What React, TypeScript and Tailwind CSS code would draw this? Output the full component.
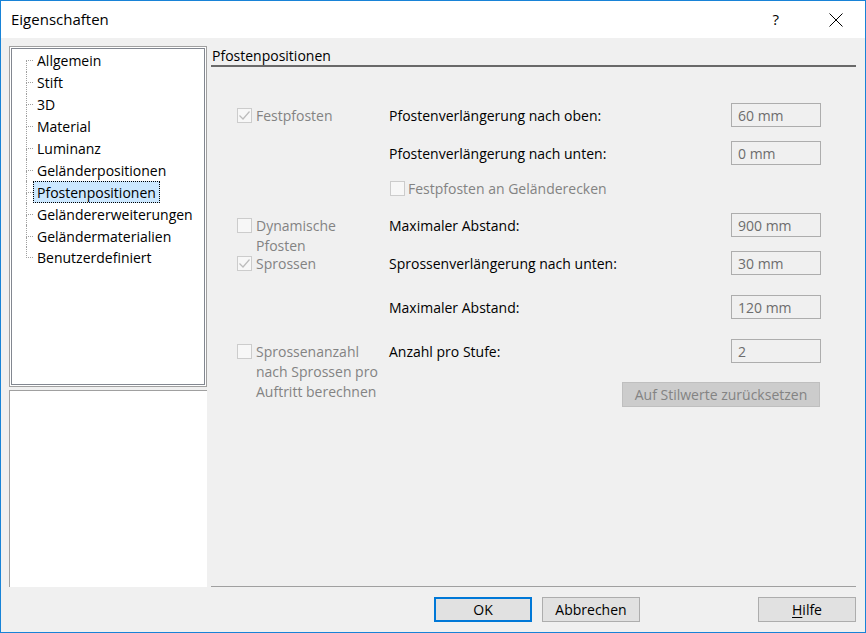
import React from 'react';

const font = { fontFamily: '"Segoe UI", "Open Sans", sans-serif' };

const treeItems = [
    'Allgemein',
    'Stift',
    '3D',
    'Material',
    'Luminanz',
    'Geländerpositionen',
    'Pfostenpositionen',
    'Geländererweiterungen',
    'Geländermaterialien',
    'Benutzerdefiniert',
];

const Check: React.FC<{ checked?: boolean }> = ({ checked }) => (
    <div className="w-[15px] h-[15px] shrink-0 border border-[#cccccc] bg-[#f7f7f7] flex items-center justify-center">
        {checked && (
            <svg width="13" height="13" viewBox="0 0 13 13">
                <path d="M1.5 6.5 L5 10 L11.5 2.5" fill="none" stroke="#bcbcbc" strokeWidth="1.2" />
            </svg>
        )}
    </div>
);

const Field: React.FC<{ value: string }> = ({ value }) => (
    <div className="w-[90px] h-[24px] shrink-0 border border-[#adadad] bg-[#f0f0f0] text-[#6d6d6d] pl-[6px] flex items-center">
        {value}
    </div>
);

// left column cell: disabled checkbox with a label that may wrap onto several lines
const LeftOption: React.FC<{ checked?: boolean; lines: string[] }> = ({ checked, lines }) => (
    <div className="w-[152px] h-[20px] shrink-0 flex items-start gap-[4px] text-[#838383] pt-[1px]">
        <div className="pt-[2px]">
            <Check checked={checked} />
        </div>
        <div className="leading-[20px]">
            {lines.map(l => (
                <div key={l}>{l}</div>
            ))}
        </div>
    </div>
);

const Row: React.FC<{ className?: string; left?: React.ReactNode; label: string; value: string }> = ({ className, left, label, value }) => (
    <div className={`flex items-center h-[24px] ${className ?? ''}`}>
        {left ?? <div className="w-[152px] shrink-0" />}
        <div className="flex-1 text-black">{label}</div>
        <Field value={value} />
    </div>
);

export default function App() {
    return (
        <div className="w-[866px] h-[633px] border border-[#1883d7] bg-[#f0f0f0] flex flex-col text-[14px] select-none" style={font}>
            {/* Title bar */}
            <div className="h-[37px] bg-white flex items-center pl-[10px] pr-[22px] shrink-0">
                <span className="text-[15px] text-black">Eigenschaften</span>
                <span className="ml-auto text-[15px] text-black mr-[50px]">?</span>
                <svg width="14" height="14" viewBox="0 0 14 14">
                    <path d="M0.5 0.5 L13.5 13.5 M13.5 0.5 L0.5 13.5" stroke="#000" strokeWidth="1" />
                </svg>
            </div>

            {/* Main area */}
            <div className="flex flex-1 pl-[8px] pt-[8px] pr-[9px] min-h-0">
                {/* Left: tree + preview */}
                <div className="w-[198px] shrink-0 flex flex-col gap-[3px]">
                    <div className="h-[341px] border border-[#a0a0a0] bg-white p-px">
                        <div className="h-full border border-[#828790] bg-white pl-[14px] pt-[1px]">
                            {treeItems.map((item, i) => {
                                const selected = item === 'Pfostenpositionen';
                                return (
                                    <div key={item} className="flex items-stretch h-[21.9px]">
                                        <div className="w-[7px] shrink-0 flex flex-col">
                                            <div className={`flex-1 border-b border-dotted border-[#a0a0a0] ${i > 0 ? 'border-l' : ''}`} />
                                            <div className={`flex-1 border-dotted border-[#a0a0a0] ${i < treeItems.length - 1 ? 'border-l' : ''}`} />
                                        </div>
                                        <div
                                            className={`flex items-center px-[3px] border border-dotted leading-[19px] text-black ${
                                                selected ? 'bg-[#cce8ff] border-black' : 'border-transparent'
                                            }`}
                                        >
                                            {item}
                                        </div>
                                    </div>
                                );
                            })}
                        </div>
                    </div>
                    <div className="flex-1 bg-white border-l border-t border-[#a0a0a0]" />
                </div>

                {/* Right: page content */}
                <div className="flex-1 ml-[4px] flex flex-col border-b border-[#a0a0a0]">
                    <div className="h-[21px] flex items-end pl-[1px] border-b-2 border-[#696969]">
                        <span className="leading-[18px] text-black">Pfostenpositionen</span>
                    </div>

                    <div className="pl-[26px] pr-[35px] pt-[36px] flex flex-col">
                        <Row left={<LeftOption checked lines={['Festpfosten']} />} label="Pfostenverlängerung nach oben:" value="60 mm" />
                        <Row className="mt-[14px]" label="Pfostenverlängerung nach unten:" value="0 mm" />

                        <div className="flex items-center h-[20px] mt-[13px]">
                            <div className="w-[152px] shrink-0" />
                            <div className="ml-[1px] flex items-center gap-[3px] text-[#838383]">
                                <Check />
                                <span>Festpfosten an Geländerecken</span>
                            </div>
                        </div>

                        <Row className="mt-[15px]" left={<LeftOption lines={['Dynamische', 'Pfosten']} />} label="Maximaler Abstand:" value="900 mm" />
                        <Row className="mt-[14px]" left={<LeftOption checked lines={['Sprossen']} />} label="Sprossenverlängerung nach unten:" value="30 mm" />
                        <Row className="mt-[20px]" label="Maximaler Abstand:" value="120 mm" />
                        <Row
                            className="mt-[20px]"
                            left={<LeftOption lines={['Sprossenanzahl', 'nach Sprossen pro', 'Auftritt berechnen']} />}
                            label="Anzahl pro Stufe:"
                            value="2"
                        />

                        <div className="flex justify-end mt-[19px] pr-[1px]">
                            <div className="w-[198px] h-[25px] bg-[#cccccc] border border-[#bfbfbf] text-[#838383] flex items-center justify-center">
                                Auf Stilwerte zurücksetzen
                            </div>
                        </div>
                    </div>
                </div>
            </div>

            {/* Dialog buttons */}
            <div className="h-[45px] shrink-0 flex items-start justify-end pt-[10px] pr-[9px]">
                <button className="w-[98px] h-[25px] bg-[#e1e1e1] border-2 border-[#0078d7] text-black">OK</button>
                <button className="w-[98px] h-[25px] ml-[10px] bg-[#e1e1e1] border border-[#adadad] text-black">Abbrechen</button>
                <button className="w-[98px] h-[25px] ml-[118px] bg-[#e1e1e1] border border-[#adadad] text-black">
                    <span className="underline underline-offset-2">H</span>ilfe
                </button>
            </div>
        </div>
    );
}
